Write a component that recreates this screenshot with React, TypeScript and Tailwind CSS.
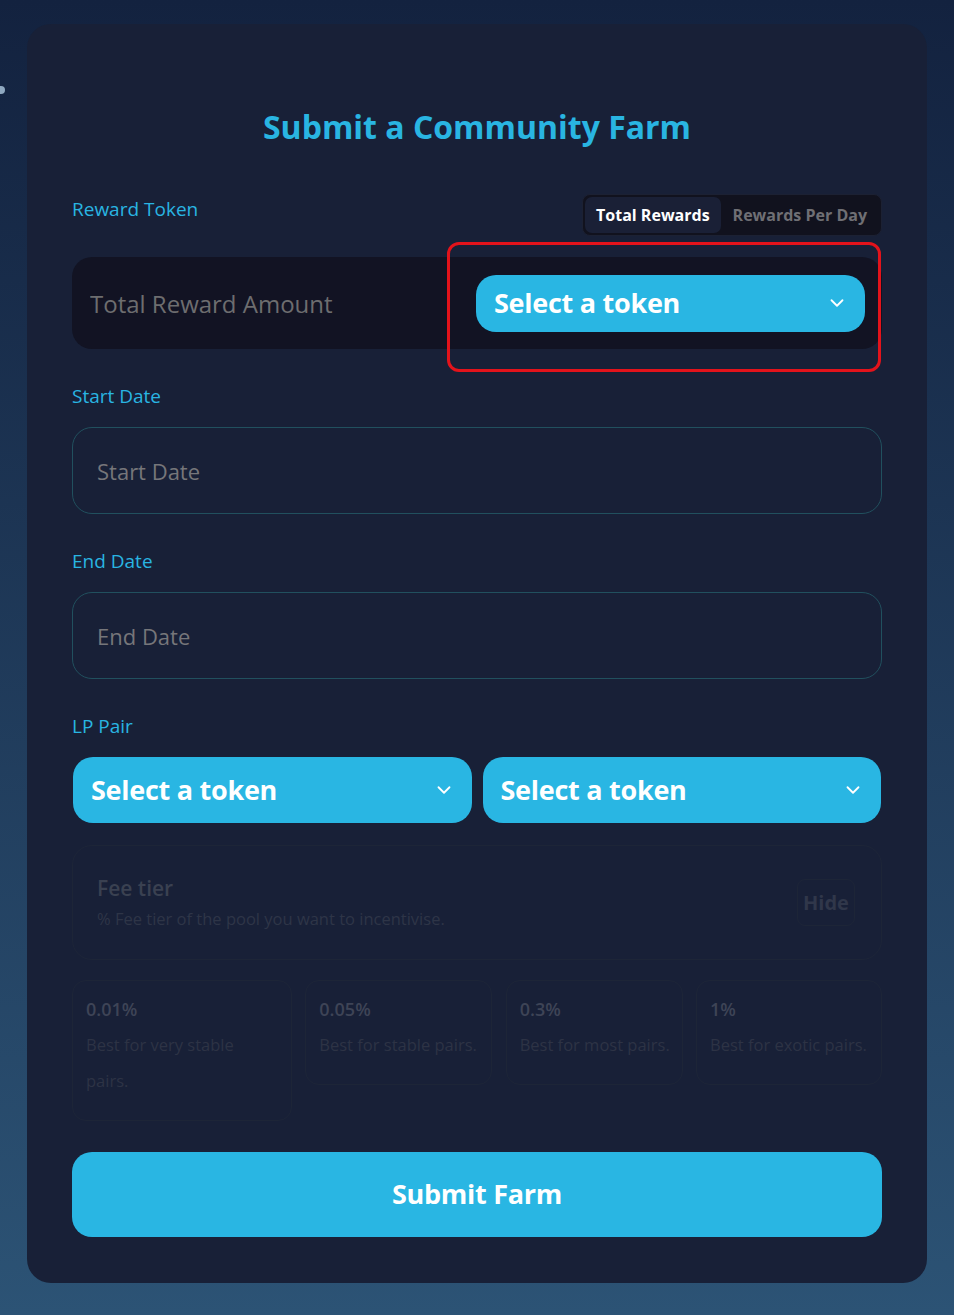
import { ChevronDown } from "lucide-react";

const FEE_TIERS = [
  { fee: "0.01%", note: "Best for very stable pairs.", width: "w-[220px] pr-[40px]" },
  { fee: "0.05%", note: "Best for stable pairs.", width: "w-[187px] pr-[4px]" },
  { fee: "0.3%", note: "Best for most pairs.", width: "w-[177px] pr-[4px]" },
  { fee: "1%", note: "Best for exotic pairs.", width: "w-[186px] pr-[4px]" },
];

function TokenSelect({ className = "" }: { className?: string }) {
  return (
    <button
      type="button"
      className={`flex items-center justify-between rounded-[20px] bg-[#29b6e3] pl-[18px] pr-[17px] text-[27px] font-bold tracking-[-0.01em] text-white ${className}`}
    >
      <span>Select a token</span>
      <ChevronDown size={22} strokeWidth={2} />
    </button>
  );
}

function FieldLabel({ children }: { children: string }) {
  return <p className="text-[19px] leading-6 text-[#29b5e2]">{children}</p>;
}

export default function App() {
  return (
    <div className="relative min-h-screen bg-gradient-to-b from-[#13223f] to-[#2c5375] px-[27px] pb-[32px] pt-[24px] font-['Open_Sans',sans-serif]">
      <span className="absolute left-[-3px] top-[86px] h-[8px] w-[8px] rounded-full bg-[#8fa8c0]" />

      <div className="mx-auto w-[900px] rounded-[24px] bg-[#182037] px-[45px] pb-[46px] pt-[83px]">
        <h1 className="text-center text-[32px] font-bold leading-10 text-[#29b5e2]">
          Submit a Community Farm
        </h1>

        <div className="mt-[47px] flex items-start justify-between">
          <div className="pt-[3px]">
            <FieldLabel>Reward Token</FieldLabel>
          </div>
          <div className="flex h-[42px] items-center rounded-[8px] border border-[#1c2133] bg-[#11121e] p-[2px] text-[16px] font-bold">
            <span className="flex h-full items-center rounded-[7px] bg-[#1a2036] px-[11px] text-white">
              Total Rewards
            </span>
            <span className="px-[12px] text-[#6f6f74]">Rewards Per Day</span>
          </div>
        </div>

        <div className="relative mt-[21px] flex h-[92px] items-center rounded-[20px] bg-[#121323]">
          <input
            placeholder="Total Reward Amount"
            className="h-full min-w-0 flex-1 bg-transparent pl-[18px] text-[24px] text-white outline-none placeholder:text-[#6d6d6f]"
          />
          <TokenSelect className="mr-[17px] h-[57px] w-[389px]" />
          <div className="pointer-events-none absolute left-[375px] top-[-15px] h-[130px] w-[434px] rounded-[12px] border-[3px] border-[#e3131b]" />
        </div>

        <div className="mt-[35px]">
          <FieldLabel>Start Date</FieldLabel>
        </div>
        <input
          placeholder="Start Date"
          className="mt-[19px] h-[87px] w-full rounded-[20px] border border-[#21505e] bg-transparent px-[24px] text-[22px] text-white outline-none placeholder:text-[#76767a]"
        />

        <div className="mt-[35px]">
          <FieldLabel>End Date</FieldLabel>
        </div>
        <input
          placeholder="End Date"
          className="mt-[19px] h-[87px] w-full rounded-[20px] border border-[#21505e] bg-transparent px-[24px] text-[22px] text-white outline-none placeholder:text-[#76767a]"
        />

        <div className="mt-[35px]">
          <FieldLabel>LP Pair</FieldLabel>
        </div>
        <div className="mt-[19px] grid grid-cols-2 gap-[11px] px-[1px]">
          <TokenSelect className="h-[66px]" />
          <TokenSelect className="h-[66px]" />
        </div>

        <div className="mt-[22px] flex h-[115px] items-center justify-between rounded-[20px] border border-[#1d2537] px-[24px]">
          <div>
            <p className="text-[21px] font-semibold leading-7 text-[#3a4151]">Fee tier</p>
            <p className="mt-[5px] text-[16.5px] text-[#2e3547]">
              % Fee tier of the pool you want to incentivise.
            </p>
          </div>
          <button
            type="button"
            className="mr-[2px] flex h-[47px] w-[58px] items-center justify-center rounded-[8px] border border-[#1d2537] text-[20px] font-bold text-[#30374a]"
          >
            Hide
          </button>
        </div>

        <div className="mt-[20px] flex items-start justify-between">
          {FEE_TIERS.map((tier) => (
            <div
              key={tier.fee}
              className={`${tier.width} rounded-[14px] border border-[#1d2537] pb-[21px] pl-[13px] pt-[10px]`}
            >
              <p className="text-[18px] font-semibold leading-9 text-[#3e4456]">{tier.fee}</p>
              <p className="text-[16.5px] leading-9 text-[#2d3345]">{tier.note}</p>
            </div>
          ))}
        </div>

        <button
          type="button"
          className="mt-[31px] flex h-[85px] w-full items-center justify-center rounded-[20px] bg-[#29b6e3] text-[27px] font-bold tracking-[-0.01em] text-white"
        >
          Submit Farm
        </button>
      </div>
    </div>
  );
}
